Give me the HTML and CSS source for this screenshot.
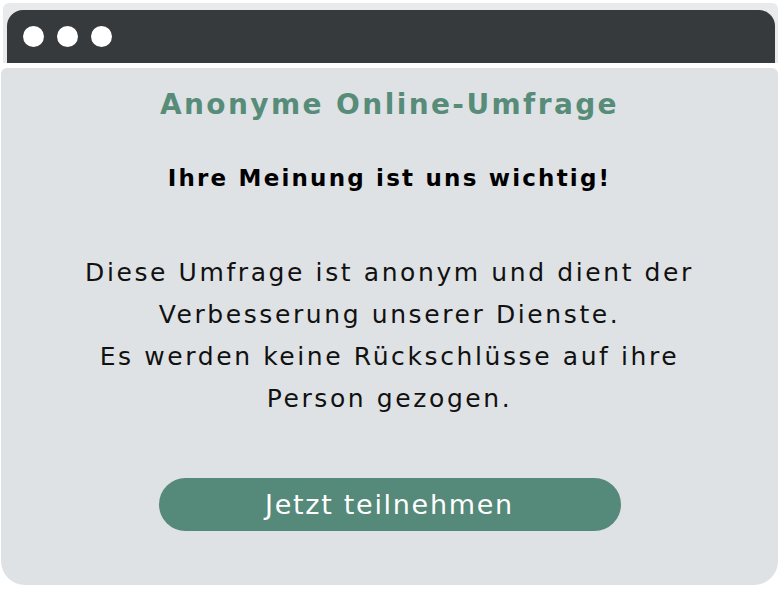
FILE: index.html
```html
<html><head>
<title>Anonyme Online-Umfrage</title>
<link rel="stylesheet" href="styles.css">
</head>
<body>
<div class="window">
	<div class="frame">
		<div class="titlebar">
			<span class="dot"></span>
			<span class="dot"></span>
			<span class="dot"></span>
		</div>
	</div>
	<div class="card">
		<h1>Anonyme Online-Umfrage</h1>
		<h2>Ihre Meinung ist uns wichtig!</h2>
		<p>Diese Umfrage ist anonym und dient der<br>
		Verbesserung unserer Dienste.<br>
		Es werden keine Rückschlüsse auf ihre<br>
		Person gezogen.</p>
		<a class="btn" href="#">Jetzt teilnehmen</a>
	</div>
</div>
</body></html>
```
FILE: styles.css
```css
html,body{margin:0;padding:0;background:#fff;}
body{font-family:"DejaVu Sans","Open Sans",sans-serif;width:781px;height:589px;overflow:hidden;}
.window{padding:3px 3px 0 1px;}
.frame{background:#e8eaeb;margin:0 0 0 2px;padding:7px 3px 0 4px;border-radius:6px 6px 0 0;}
.titlebar{background:#363a3c;height:53px;border-radius:16px 16px 0 0;display:flex;align-items:center;gap:13px;padding:0 0 0 16px;}
.dot{width:21px;height:21px;border-radius:50%;background:#fff;}
.card{background:#dfe2e5;margin-top:5px;height:517px;border-radius:6px 6px 24px 24px;text-align:center;display:flex;flex-direction:column;align-items:center;}
h1{color:#578c79;font-size:28px;font-weight:700;margin:17px 0 0;line-height:40px;letter-spacing:2.4px;}
h2{color:#000;font-size:23px;font-weight:700;margin:38px 0 0;line-height:30px;letter-spacing:2.2px;}
p{color:#111;font-size:25px;line-height:42px;margin:59px 0 0;letter-spacing:2.6px;}
.btn{display:block;margin-top:58px;width:462px;height:53px;line-height:53px;background:#558979;color:#fff;font-size:27px;text-decoration:none;border-radius:27px;letter-spacing:1.7px;}
```
